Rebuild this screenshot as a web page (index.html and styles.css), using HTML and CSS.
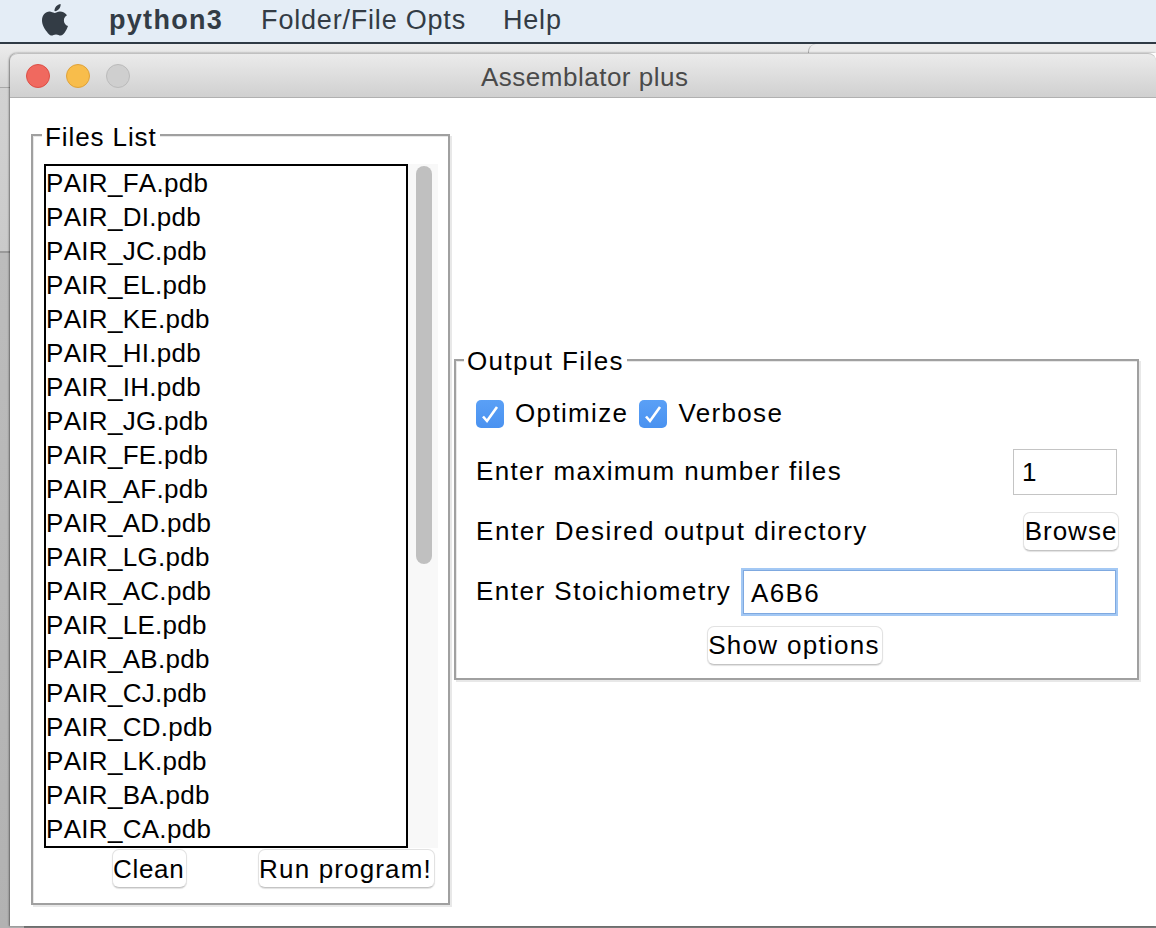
FILE: index.html
```html
<!DOCTYPE html>
<html lang="en">
<head>
    <meta charset="UTF-8">
    <title>Assemblator plus</title>
    <link rel="stylesheet" href="styles.css">
</head>
<body>
    <div class="menubar">
        <svg class="apple" viewBox="0 0 26 32" width="26" height="32"><path d="M18.600 0c.2 2-.5 3.700-1.600 5-1.100 1.300-2.800 2.300-4.500 2.100-.2-1.800.7-3.600 1.700-4.800C15.300 1 17.200.1 18.600 0zM25 11.300c-2 1.300-3.100 3-3.100 5.100 0 2.500 1.400 4.500 4.100 5.700-.7 2.200-1.800 4.300-3.100 6.100-1.300 1.800-2.500 3.300-4.300 3.300-1.700 0-2.400-1.100-4.600-1.100-2.100 0-3 1.100-4.600 1.100-1.800 0-3.100-1.700-4.500-3.700C2.700 25.500 0 20.700 0 16.600c0-5.500 3.500-9 7.500-9 1.900 0 3.500 1.300 5 1.300 1.400 0 3.200-1.400 5.400-1.400 2.900 0 5.500 1.400 7.100 3.800z"/></svg>
        <span class="menu-app">python3</span>
        <span class="menu-item">Folder/File Opts</span>
        <span class="menu-item">Help</span>
    </div>
    <div class="desktop">
        <div class="back-corner"></div>
        <div class="back-strip"></div>
        <div class="window">
            <div class="titlebar">
                <span class="light light-red"></span>
                <span class="light light-yellow"></span>
                <span class="light light-grey"></span>
                <span class="title">Assemblator plus</span>
            </div>
            <div class="content">
                <div class="group files-group">
                    <span class="legend">Files List</span>
                    <div class="list-row">
                        <ul class="file-list">
                            <li>PAIR_FA.pdb</li>
                            <li>PAIR_DI.pdb</li>
                            <li>PAIR_JC.pdb</li>
                            <li>PAIR_EL.pdb</li>
                            <li>PAIR_KE.pdb</li>
                            <li>PAIR_HI.pdb</li>
                            <li>PAIR_IH.pdb</li>
                            <li>PAIR_JG.pdb</li>
                            <li>PAIR_FE.pdb</li>
                            <li>PAIR_AF.pdb</li>
                            <li>PAIR_AD.pdb</li>
                            <li>PAIR_LG.pdb</li>
                            <li>PAIR_AC.pdb</li>
                            <li>PAIR_LE.pdb</li>
                            <li>PAIR_AB.pdb</li>
                            <li>PAIR_CJ.pdb</li>
                            <li>PAIR_CD.pdb</li>
                            <li>PAIR_LK.pdb</li>
                            <li>PAIR_BA.pdb</li>
                            <li>PAIR_CA.pdb</li>
                        </ul>
                        <div class="scrollbar"><div class="thumb"></div></div>
                    </div>
                    <div class="list-buttons">
                        <button class="btn btn-clean">Clean</button>
                        <button class="btn btn-run">Run program!</button>
                    </div>
                </div>
                <div class="group output-group">
                    <span class="legend">Output Files</span>
                    <div class="row check-row">
                        <span class="check"><svg viewBox="0 0 28 28" width="28" height="28"><path d="M7 16.500l4 4.500 10-14" fill="none" stroke="#fff" stroke-width="2.600"/></svg></span>
                        <span class="label">Optimize</span>
                        <span class="check"><svg viewBox="0 0 28 28" width="28" height="28"><path d="M7 16.500l4 4.500 10-14" fill="none" stroke="#fff" stroke-width="2.600"/></svg></span>
                        <span class="label">Verbose</span>
                    </div>
                    <div class="row spread number-row">
                        <span class="label">Enter maximum number files</span>
                        <div class="field number-field">1</div>
                    </div>
                    <div class="row spread browse-row">
                        <span>Enter Desired output directory</span>
                        <button class="btn btn-browse">Browse</button>
                    </div>
                    <div class="row spread stoich-row">
                        <span class="label">Enter Stoichiometry</span>
                        <div class="field stoich-field">A6B6</div>
                    </div>
                    <div class="options-row">
                        <button class="btn btn-options">Show options</button>
                    </div>
                </div>
            </div>
        </div>
    </div>
</body>
</html>
```

FILE: styles.css
```css
html, body {
    margin: 0;
    padding: 0;
    height: 100%;
    overflow: hidden;
}

body {
    width: 1156px;
    height: 928px;
    font-family: "Liberation Sans", Arial, sans-serif;
    font-size: 26px;
    color: #000;
    display: flex;
    flex-direction: column;
}

.menubar {
    height: 42px;
    box-sizing: border-box;
    padding-bottom: 2px;
    background-color: #e4edf6;
    color: #333c45;
    font-size: 27px;
    letter-spacing: .8px;
    display: flex;
    align-items: center;
    flex-shrink: 0;
}

.apple {
    margin: 0 0 0 42px;
    fill: #333c45;
}

.menu-app {
    font-weight: bold;
    margin-left: 41px;
    letter-spacing: 1.3px;
}

.menu-item {
    margin-left: 38px;
}

.menu-item + .menu-item {
    margin-left: 37px;
}

.desktop {
    flex: 1;
    position: relative;
    border-top: 2px solid #2f3a44;
    padding: 9px 0 2px 10px;
    background: linear-gradient(#ececec, #d4d4d4 43px, #a8a8a8 43px, #a8a8a8 44px, #d2d2d2 44px, #cacaca 207px, #9a9a9a 207px, #9a9a9a 209px, #bcbcbc 209px, #b2b2b2);
}

/* corner of another window that shows above the front one */
.back-corner {
    position: absolute;
    left: 808px;
    right: 0;
    top: 0;
    height: 9px;
    background-color: #ececec;
    border-left: 1px solid #b0b0b0;
    border-top-left-radius: 8px;
}

.back-strip {
    position: absolute;
    left: 24px;
    right: 0;
    bottom: 0;
    height: 2px;
    background-color: #7c7c7c;
}

.window {
    height: 100%;
    position: relative;
    display: flex;
    flex-direction: column;
    background-color: #fff;
    border-top-left-radius: 8px;
    box-shadow: -1px 0 2px rgba(0, 0, 0, .45);
}

.titlebar {
    height: 45px;
    box-sizing: border-box;
    flex-shrink: 0;
    border-top: 1px solid #c0c0c0;
    border-bottom: 1px solid #b0b0b0;
    border-radius: 8px 8px 0 0;
    background: linear-gradient(#ebebeb, #d0d0d0);
    display: flex;
    align-items: center;
    padding: 1px 0 0 16px;
    gap: 16px;
    position: relative;
}

.light {
    width: 24px;
    height: 24px;
    box-sizing: border-box;
    border-radius: 50%;
    border: 1px solid;
}

.light-red { background-color: #f0695f; border-color: #dc4f46; }
.light-yellow { background-color: #f8bd4b; border-color: #dfa23a; }
.light-grey { background-color: #cfcfcf; border-color: #bbb; }

.title {
    position: absolute;
    left: 471px;
    top: 8px;
    color: #4a4a4a;
    letter-spacing: .5px;
}

.content {
    flex: 1;
    display: flex;
    align-items: flex-start;
    padding: 36px 0 0 21px;
}

.group {
    position: relative;
    box-sizing: border-box;
    border: 2px solid #a0a0a0;
    box-shadow: 2px 2px 0 #e8e8e8, inset 1px 1px 0 #e8e8e8;
}

.legend {
    position: absolute;
    top: -13px;
    left: 9px;
    padding: 0 3px;
    line-height: 28px;
    background-color: #fff;
    letter-spacing: .9px;
}

.files-group {
    width: 419px;
    height: 771px;
    padding: 28px 10px 0 11px;
}

.list-row {
    display: flex;
}

.file-list {
    list-style: none;
    margin: 0;
    padding: 0;
    width: 364px;
    height: 684px;
    box-sizing: border-box;
    border: 2px solid #000;
    overflow: hidden;
    font-kerning: none;
    letter-spacing: .3px;
}

.file-list li {
    height: 34px;
    line-height: 34px;
}

.scrollbar {
    width: 30px;
    background-color: #f8f8f8;
    padding: 2px 6px 0 8px;
    box-sizing: border-box;
}

.thumb {
    width: 16px;
    height: 398px;
    border-radius: 8px;
    background-color: #c0c0c0;
}

.list-buttons {
    display: flex;
    justify-content: space-between;
    margin: 1px 3px 0 68px;
}

.btn {
    font: inherit;
    color: #000;
    height: 39px;
    padding: 0 0 1px;
    white-space: nowrap;
    background-color: #fff;
    border: 1px solid #e2e2e2;
    border-bottom-color: #c4c4c4;
    border-radius: 7px;
    box-shadow: 0 1px 1px rgba(0, 0, 0, .12);
}

.btn-clean { width: 75px; padding: 1px 2px 0 0; letter-spacing: .7px; }
.btn-run { width: 177px; padding: 1px 2px 0 0; letter-spacing: 1.15px; }
.btn-browse { width: 96px; letter-spacing: 1px; }
.btn-options { width: 176px; padding-right: 2px; letter-spacing: 1.3px; }

.output-group {
    width: 685px;
    height: 321px;
    margin: 225px 0 0 4px;
    padding: 39px 18px 0 20px;
    letter-spacing: 1.35px;
}

.output-group .legend {
    top: -14px;
    left: 8px;
    letter-spacing: 1.4px;
}

.row {
    display: flex;
    align-items: center;
}

.label {
    padding-bottom: 2px;
}

.spread {
    justify-content: space-between;
}

.check-row {
    height: 28px;
    gap: 11px;
}

.check {
    width: 28px;
    height: 28px;
    border-radius: 5px;
    background: linear-gradient(#5aa0f6, #4a92f0);
}

.check svg {
    display: block;
}

.number-row {
    margin-top: 21px;
}

.field {
    box-sizing: border-box;
    background-color: #fff;
}

.number-field {
    width: 104px;
    height: 46px;
    margin-right: 2px;
    line-height: 44px;
    padding-left: 8px;
    border: 1px solid #c4c4c4;
}

.browse-row {
    margin-top: 17px;
    letter-spacing: 1.55px;
}

.stoich-row {
    margin-top: 19px;
    letter-spacing: 1.5px;
}

.stoich-field {
    width: 373px;
    height: 44px;
    margin-right: 3px;
    line-height: 44px;
    padding-left: 7px;
    letter-spacing: 1.4px;
    border: 1px solid #7fa9e0;
    outline: 2px solid #a3c8f4;
}

.options-row {
    display: flex;
    justify-content: center;
    padding-right: 5px;
    margin-top: 12px;
}
```
